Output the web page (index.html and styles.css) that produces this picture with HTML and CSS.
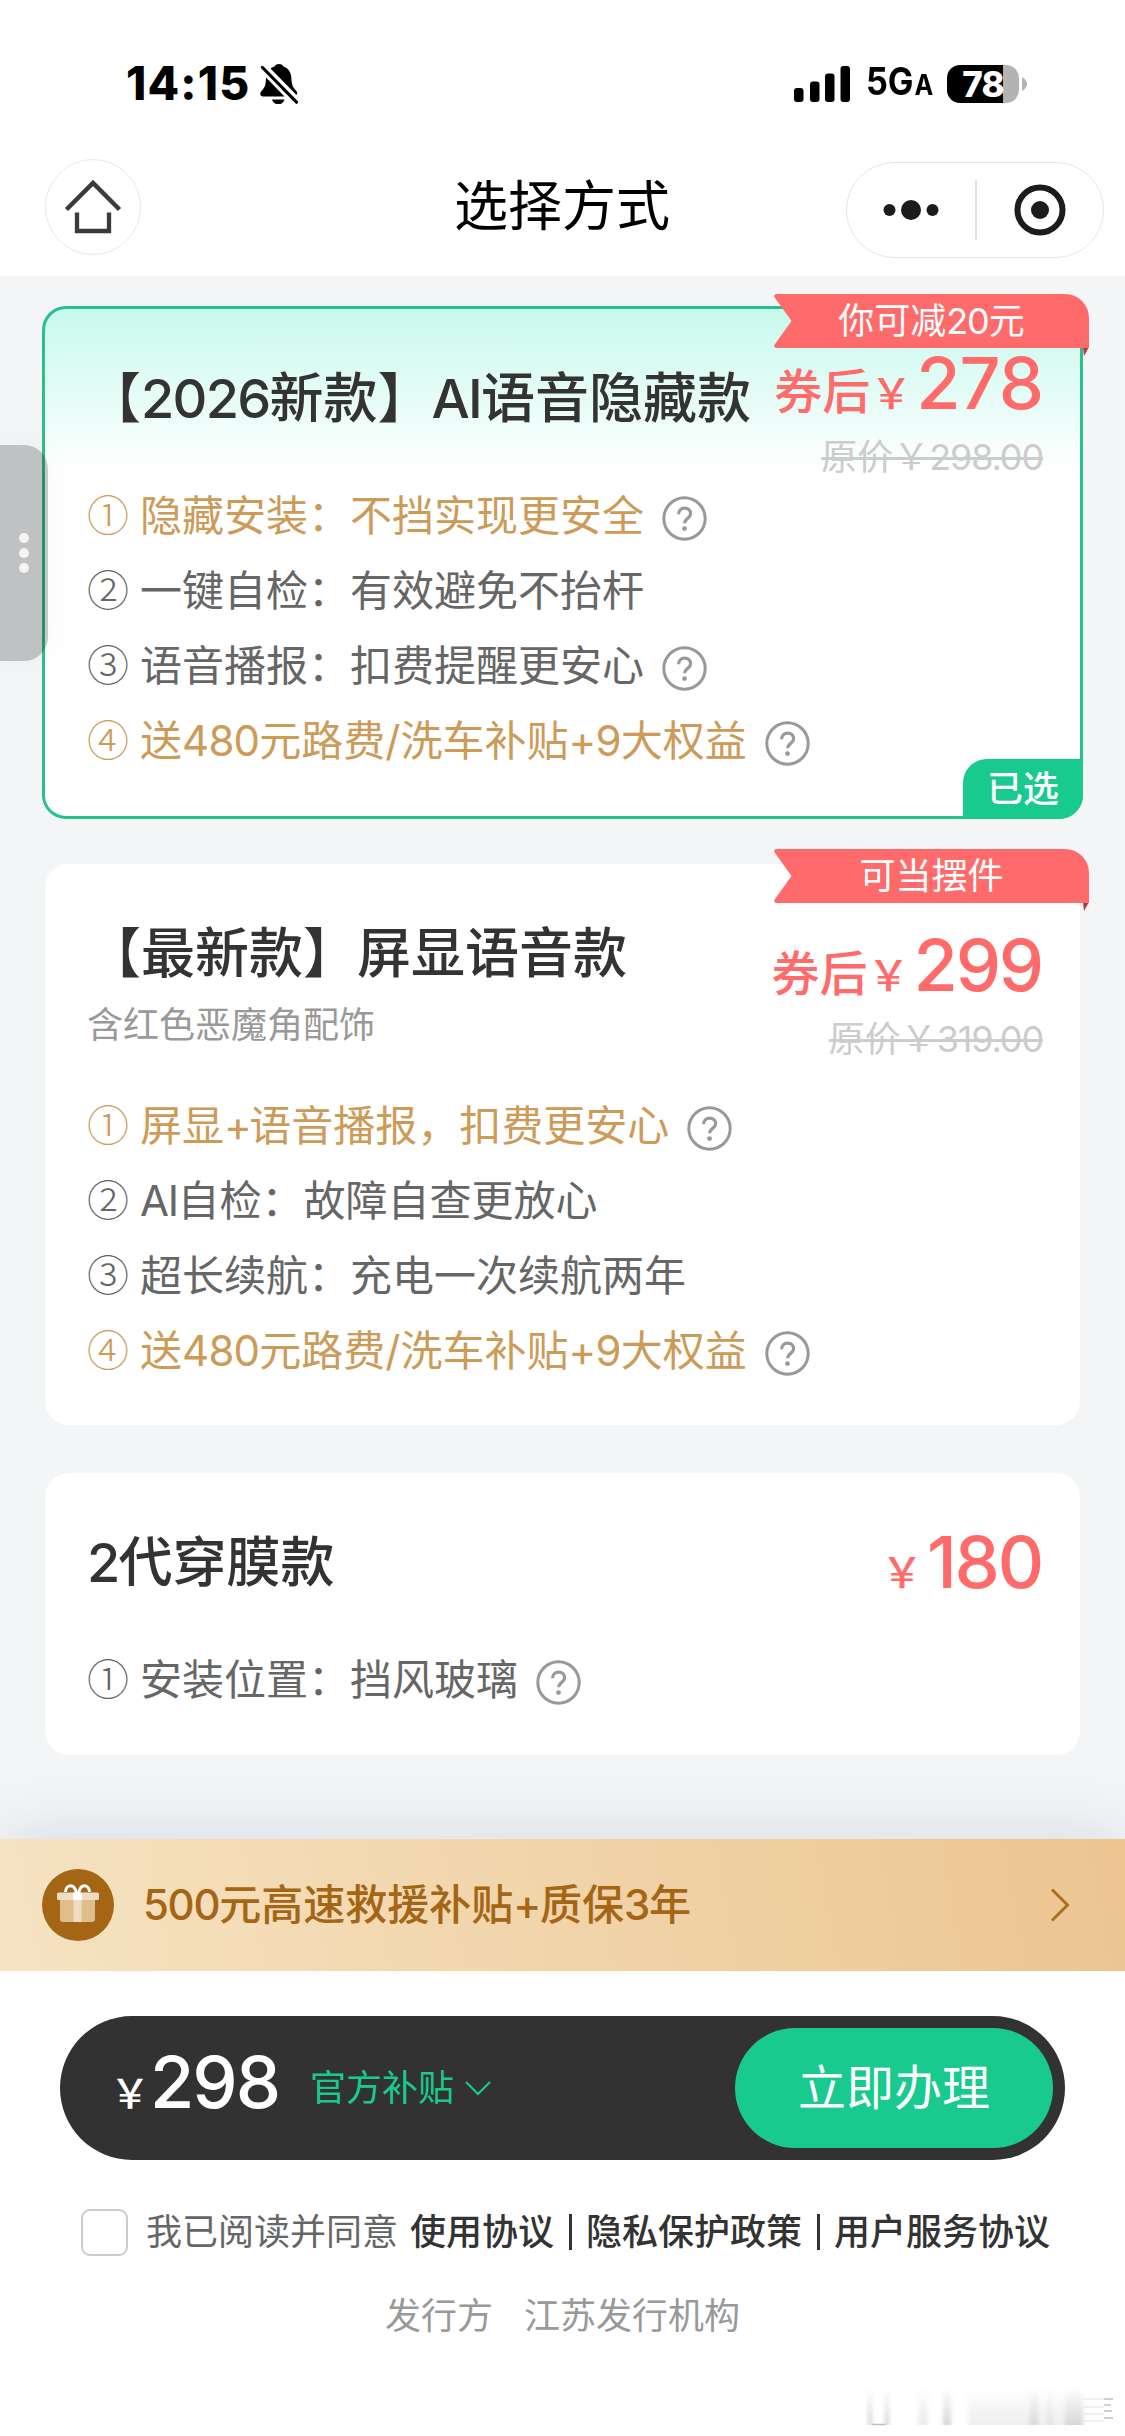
FILE: index.html
```html
<!DOCTYPE html>
<html lang="zh-CN">
<head>
<meta charset="utf-8">
<title>选择方式</title>
<link rel="stylesheet" href="styles.css">
</head>
<body>
<svg class="defs" width="0" height="0" aria-hidden="true">
  <symbol id="help" viewBox="0 0 45 45">
    <circle cx="22.5" cy="22.5" r="20.7" fill="none" stroke="#999" stroke-width="3"/>
    <path d="M16.6 18.3c0-3.6 2.4-6.1 6-6.1s6 2.3 6 5.5c0 4.4-5.9 4.6-5.9 9.6" fill="none" stroke="#999" stroke-width="3.2"/>
    <circle cx="22.5" cy="32.6" r="2.4" fill="#999"/>
  </symbol>
  <symbol id="ribbon" viewBox="0 0 315 62">
    <path d="M309 53h6l-5 9z" fill="#b33a44"/>
    <path d="M2 0H291a24 24 0 0 1 24 24V54H2Q-1 53 1 50L17.500 27L1 4Q-1 1 2 0Z" fill="#ff6b6b"/>
  </symbol>
</svg>

<header class="top">
  <div class="status">
    <div class="status-left">
      <span class="clock">14:15</span>
      <svg class="bell" viewBox="0 0 38 40" width="38" height="40">
        <path d="M10.500 4.500C12 3.200 13.600 2.600 14.600 2.400C15.500 0.800 17 0 19 0s3.500 0.800 4.400 2.400C28 3.800 31 8 31.300 13.500C31.600 21 33 23.500 36 26.500C37.500 28 37.500 30 36.500 31Z"/>
        <path d="M6 13.500L24.500 32.500H3C0 32.500-0.600 29 1.500 27C5 23.500 6 20 6 13.500Z"/>
        <path d="M2.500 3.500L36.500 38.200" stroke="#000" stroke-width="3.200" stroke-linecap="round"/>
        <path d="M12 35.500H24.500Q23 40.200 18.300 40.200T12 35.500Z"/>
      </svg>
    </div>
    <div class="status-right">
      <svg class="signal" viewBox="0 0 56 36" width="56" height="36">
        <rect x="0" y="22" width="9.500" height="14" rx="3"/>
        <rect x="16" y="15.500" width="9.500" height="20.500" rx="3"/>
        <rect x="31" y="7.500" width="9.500" height="28.500" rx="3"/>
        <rect x="46.500" y="0" width="9.500" height="36" rx="3"/>
      </svg>
      <span class="network">5G<small>A</small></span>
      <span class="battery"><span class="level">78</span></span>
      <svg class="nub" viewBox="0 0 5 14" width="5" height="14"><path d="M0 0Q5 3 5 7T0 14Z" fill="#b3b3b3"/></svg>
    </div>
  </div>
  <div class="nav">
    <div class="home">
      <svg viewBox="0 0 60 60" width="60" height="60" fill="none" stroke="#3a3a3a">
        <path d="M3.500 32.500L30 6L56.500 32.500" stroke-width="4.500"/>
        <path d="M14 35.500V54H46V35.500" stroke-width="4.300"/>
      </svg>
    </div>
    <h1>选择方式</h1>
    <div class="capsule">
      <svg viewBox="0 0 50 24" width="50" height="24" fill="#1c1c1c"><circle cx="3.500" cy="12" r="6"/><circle cx="25" cy="12" r="10"/><circle cx="46.500" cy="12" r="6"/></svg>
      <i></i>
      <svg viewBox="0 0 52 52" width="52" height="52"><circle cx="26" cy="26" r="22.500" fill="none" stroke="#1c1c1c" stroke-width="6"/><circle cx="26" cy="26" r="9" fill="#1c1c1c"/></svg>
    </div>
  </div>
</header>

<main>
  <section class="card selected">
    <div class="info">
      <h2>【<span class="n">2026</span>新款】<span class="n">AI</span>语音隐藏款</h2>
      <ul>
        <li class="gold"><b>①</b>隐藏安装：不挡实现更安全<svg><use href="#help"/></svg></li>
        <li><b>②</b>一键自检：有效避免不抬杆</li>
        <li><b>③</b>语音播报：扣费提醒更安心<svg><use href="#help"/></svg></li>
        <li class="gold"><b>④</b>送<span class="d">480</span>元路费/洗车补贴<span class="d">+9</span>大权益<svg><use href="#help"/></svg></li>
      </ul>
    </div>
    <div class="cost">
      <div class="price"><span class="after">券后</span><span class="yen">￥</span>278</div>
      <del>原价￥<span class="n">298.00</span></del>
    </div>
    <div class="ribbon"><svg><use href="#ribbon"/></svg><p>你可减<span class="n">20</span>元</p></div>
    <div class="chosen">已选</div>
  </section>

  <section class="card screen">
    <div class="info">
      <h2>【最新款】屏显语音款</h2>
      <p class="note">含红色恶魔角配饰</p>
      <ul>
        <li class="gold"><b>①</b>屏显<span class="plus">+</span>语音播报，扣费更安心<svg><use href="#help"/></svg></li>
        <li><b>②</b><span class="n">AI</span>自检：故障自查更放心</li>
        <li><b>③</b>超长续航：充电一次续航两年</li>
        <li class="gold"><b>④</b>送<span class="d">480</span>元路费/洗车补贴<span class="d">+9</span>大权益<svg><use href="#help"/></svg></li>
      </ul>
    </div>
    <div class="cost">
      <div class="price"><span class="after">券后</span><span class="yen">￥</span>299</div>
      <del>原价￥<span class="n">319.00</span></del>
    </div>
    <div class="ribbon"><svg><use href="#ribbon"/></svg><p>可当摆件</p></div>
  </section>

  <section class="card film">
    <div class="info">
      <h2><span class="n">2</span>代穿膜款</h2>
      <ul>
        <li><b>①</b>安装位置：挡风玻璃<svg><use href="#help"/></svg></li>
      </ul>
    </div>
    <div class="cost">
      <div class="price"><span class="yen">￥</span>180</div>
    </div>
  </section>
</main>

<footer>
  <div class="benefit">
    <svg class="gift" viewBox="0 0 72 72" width="72" height="72">
      <circle cx="36" cy="36" r="36" fill="#a46615"/>
      <path d="M18 31H53V50Q53 53 50 53H21Q18 53 18 50Z" fill="#e0be8c"/>
      <rect x="15" y="23.500" width="42" height="7.500" rx="1.500" fill="#efdcc2"/>
      <rect x="31.500" y="31" width="8" height="22" fill="#eedcc4"/>
      <rect x="31" y="23.500" width="9" height="7.500" fill="#fff"/>
      <path d="M34.500 24C32 13.500 24 15.500 23.500 23M36.500 24C39 13.500 47 15.500 47.500 23" fill="none" stroke="#fff" stroke-width="3"/>
    </svg>
    <p><span class="n">500</span>元高速救援补贴<span class="n">+</span>质保<span class="n">3</span>年</p>
    <svg class="more" viewBox="0 0 20 34" width="20" height="34"><path d="M2 1.500L17.500 17L2 32.500" fill="none" stroke="#a8701f" stroke-width="3"/></svg>
  </div>
  <div class="order">
    <div class="total"><span class="yen">￥</span>298</div>
    <span class="subsidy">官方补贴</span>
    <svg class="down" viewBox="0 0 26 15" width="26" height="15"><path d="M1 1L13 13L25 1" fill="none" stroke="#18ca8d" stroke-width="2.200"/></svg>
    <button type="button">立即办理</button>
  </div>
  <div class="agree">
    <span class="box"></span>
    <span class="read">我已阅读并同意</span>
    <a>使用协议</a><i></i><a>隐私保护政策</a><i></i><a>用户服务协议</a>
  </div>
  <div class="issuer"><span>发行方</span><span>江苏发行机构</span></div>
</footer>

<div class="handle"><i></i><i></i><i></i></div>
<svg class="mark" viewBox="0 0 250 40" width="250" height="40" aria-hidden="true">
  <defs>
    <linearGradient id="fade" x1="0" y1="0" x2="0" y2="1"><stop offset="0" stop-color="#888" stop-opacity="0"/><stop offset="1" stop-color="#888" stop-opacity="1"/></linearGradient>
    <filter id="soft"><feGaussianBlur stdDeviation="2 0"/></filter>
  </defs>
  <g fill="url(#fade)" filter="url(#soft)">
    <rect x="2" y="0" width="4" height="37" opacity=".4"/>
    <rect x="19" y="0" width="4" height="37" opacity=".4"/>
    <rect x="52" y="0" width="10" height="37" opacity=".17"/>
    <rect x="77" y="0" width="8" height="37" opacity=".35"/>
    <rect x="102" y="0" width="116" height="37" opacity=".14"/>
    <rect x="164" y="0" width="8" height="37" opacity=".22"/>
    <rect x="181" y="0" width="5" height="37" opacity=".15"/>
    <rect x="199" y="0" width="18" height="37" opacity=".22"/>
  </g>
  <path d="M6 36.500H19" stroke="#999" stroke-width="1.500" opacity=".6"/>
  <path d="M218 11H238M218 19H238M218 26H238M218 33H238" stroke="#999" stroke-width="2" opacity=".13"/>
  <path d="M238 11H247M238 17H245M238 23H246M238 30H247" stroke="#999" stroke-width="2" opacity=".45"/>
</svg>
</body>
</html>
```
FILE: styles.css
```css
* { box-sizing: border-box; margin: 0; padding: 0; }

body {
  position: relative;
  width: 1125px;
  height: 2436px;
  overflow: hidden;
  background: #fff;
  color: #333;
  font-family: Inter, "Noto Sans CJK SC", sans-serif;
  font-size: 42px;
}
svg { display: block; flex: none; }
.defs { position: absolute; }
ul { list-style: none; }
i { font-style: normal; }
/* tighter tracking for latin letters and digits set among Chinese text */
.n { letter-spacing: -.032em; }
.d { letter-spacing: -.018em; }
.plus { letter-spacing: -.06em; }

/* status bar */
.top { height: 276px; display: flex; flex-direction: column; }
.status { height: 159px; padding: 60px 98px 0 126px; display: flex; justify-content: space-between; }
.status-left, .status-right { display: flex; align-items: center; height: 47px; color: #000; }
.clock { font-size: 46px; font-weight: 800; line-height: 47px; letter-spacing: 1.2px; width: 134px; white-space: nowrap; }
.signal { margin-right: 16px; }
.network { width: 81px; font-size: 38px; font-weight: 700; line-height: 49px; white-space: nowrap; transform: scaleX(.9); transform-origin: left; }
.network small { font-size: 28px; margin-left: 1px; }
.battery { width: 72px; height: 38px; border-radius: 13px; background: linear-gradient(90deg, #000 56px, #b3b3b3 56px); display: flex; justify-content: center; }
.level { color: #fff; font-size: 35px; font-weight: 800; line-height: 38px; letter-spacing: -1px; }
.nub { margin-left: 3px; }

/* navigation */
.nav { height: 102px; padding: 0 21px 0 45px; display: grid; grid-template-columns: 258px 1fr 258px; }
.home { width: 96px; height: 96px; border: 1px solid #e8e8e8; border-radius: 50%; display: flex; align-items: center; justify-content: center; }
.nav h1 { font-size: 54px; font-weight: 400; line-height: 96px; text-align: center; color: #000; padding-right: 25px; }
.capsule { width: 258px; height: 96px; margin-top: 3px; border: 1px solid #e6e6e6; border-radius: 48px; display: grid; grid-template-columns: 128px 2px 1fr; align-items: center; justify-items: center; }
.capsule svg { overflow: visible; }
.capsule i { width: 2px; height: 60px; background: #e2e2e2; }

/* product cards */
main { height: 1563px; padding: 33px 45px 0; background: #f4f5f7; display: flex; flex-direction: column; gap: 48px; }
.card { position: relative; height: 507px; padding: 51px 37px 0 42px; border-radius: 24px; background: #fff; display: flex; }
.selected { margin: -3px; height: 513px; border: 3px solid #2bbf8e; background: linear-gradient(#c8f9ed, #fff 162px); }
.screen { height: 561px; }
.film { height: 282px; }
.info { flex: 1; min-width: 0; white-space: nowrap; }
h2 { font-size: 54px; font-weight: 500; line-height: 78px; }
.note { margin-top: 10px; font-size: 36px; line-height: 44px; color: #999; }
.info ul { margin-top: 40px; }
.screen ul { margin-top: 41px; }
li { height: 75px; line-height: 75px; font-size: 42px; color: #666; display: flex; }
li b { flex: none; width: 53px; font-weight: 300; font-family: "Noto Sans CJK SC", sans-serif; line-height: 69px; }
li svg { width: 45px; height: 45px; margin: 18px 0 0 18px; }
.gold { color: #cd9b58; }
.cost { display: flex; flex-direction: column; align-items: flex-end; }
.selected .cost { margin-top: -13px; }
.screen .cost { margin-top: 14px; }
.film .cost { margin-top: 2px; }
.price { padding-right: 1px; font-size: 72px; font-weight: 500; line-height: 72px; letter-spacing: -2.2px; color: #ff6b6b; white-space: nowrap; }
.selected .price { letter-spacing: -1px; padding-right: 0; }
.price span, .selected .price span { line-height: 1; letter-spacing: 0; }
.after { font-size: 48px; font-weight: 500; }
.yen { font-size: 42px; font-weight: 500; }
.price .yen { margin-right: 4px; }
del { margin-top: 16px; font-size: 36px; line-height: 44px; color: #ccc; }
.ribbon { position: absolute; top: -15px; right: -9px; width: 315px; height: 54px; color: #fff; }
.ribbon svg { position: absolute; width: 315px; height: 62px; }
.ribbon p { position: relative; text-align: center; font-size: 36px; line-height: 54px; }
.chosen { position: absolute; right: -3px; bottom: -3px; width: 120px; height: 60px; border-radius: 24px 0 24px 0; background: #18ca8d; color: #fff; font-size: 36px; font-weight: 500; line-height: 60px; text-align: center; }

/* bottom panel */
footer { position: relative; background: #fff; box-shadow: 0 -6px 60px rgba(20, 50, 70, .12); height: 597px; }
.benefit { height: 132px; padding: 0 55px 0 42px; background: linear-gradient(80deg, #f6e3c2, #ecc591); display: flex; align-items: center; color: #a46615; font-weight: 500; }
.benefit p { flex: 1; margin-left: 29px; line-height: 60px; }
.order { margin: 45px 60px 0; height: 144px; padding: 0 12px 0 50px; border-radius: 72px; background: #323232; display: flex; align-items: center; }
.total { width: 200px; font-size: 72px; font-weight: 500; line-height: 72px; letter-spacing: -2px; color: #fff; white-space: nowrap; margin-top: -12px; }
.total .yen { font-size: 40px; line-height: 1; letter-spacing: 0; }
.subsidy { font-size: 36px; line-height: 44px; color: #18ca8d; }
.down { margin-left: 11px; }
button { margin-left: auto; width: 318px; height: 120px; border: 0; border-radius: 60px; background: #18ca8d; color: #fff; font: 400 48px/118px Inter, "Noto Sans CJK SC", sans-serif; }
.agree { margin-top: 48px; height: 48px; padding-left: 81px; display: flex; align-items: center; font-size: 36px; line-height: 48px; white-space: nowrap; }
.box { width: 47px; height: 47px; border: 2px solid #ccc; border-radius: 9px; }
.read { margin: 0 12px 0 18px; color: #666; }
.agree a { font-weight: 500; }
.agree i { width: 3px; height: 36px; margin: 0 14.5px; background: #333; }
.issuer { margin-top: 38px; display: flex; justify-content: center; gap: 31px; font-size: 36px; line-height: 44px; color: #999; }

/* floating drawer handle and corner mark */
.handle { position: absolute; left: 0; top: 445px; width: 48px; height: 216px; border-radius: 0 24px 24px 0; background: rgba(0, 0, 0, .21); box-shadow: 0 0 30px rgba(0, 0, 0, .04); display: flex; flex-direction: column; align-items: center; justify-content: center; gap: 5px; }
.handle i { width: 10px; height: 10px; border-radius: 50%; background: #f4f4f4; }
.mark { position: absolute; left: 866px; top: 2388px; }
```
